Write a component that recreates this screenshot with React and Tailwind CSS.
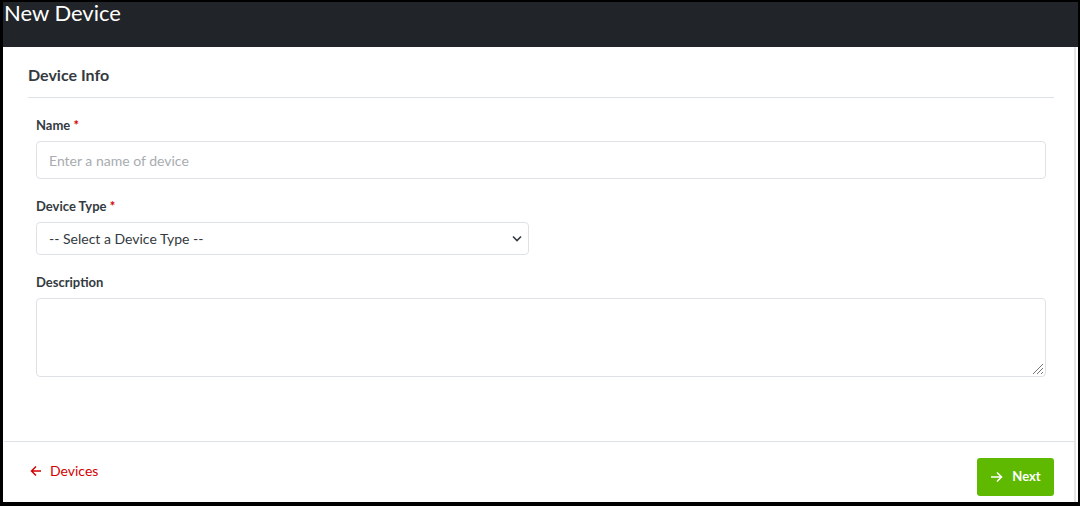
import React from "react";

export default function App() {
  return (
    <div className="w-[1080px] h-[506px] bg-black pl-[3px] pr-[2px] pt-[2px] pb-[4px] overflow-hidden" style={{ fontFamily: "Lato, 'Open Sans', sans-serif" }}>
      <div className="h-full bg-white flex flex-col">
        <div className="h-[45px] bg-[#212529] shrink-0">
          <div className="text-white text-[22px] leading-[22px] pl-[1px]">New Device</div>
        </div>
        <div className="flex-1 flex flex-col ml-[1px] mr-[2px] border-r-[2px] border-[#e5e5e5]">
          <div className="flex-1 pl-[24px] pr-[20px]">
            <div className="pt-[18px] pb-[12px] border-b border-[#dee2e6]">
              <h2 className="text-[16px] font-bold text-[#343a40] leading-[20px]">Device Info</h2>
            </div>
            <div className="pl-[8px] mr-[8px]">
              <label className="block mt-[19px] text-[13px] font-bold text-[#343a40] leading-[16px]">
                Name <span className="text-[#d40000]">*</span>
              </label>
              <div className="mt-[8px] h-[38px] border border-[#dee2e6] rounded-[4px] flex items-center px-[12px]">
                <span className="text-[14px] text-[#a8acb0]">Enter a name of device</span>
              </div>
              <label className="block mt-[19px] text-[13px] font-bold text-[#343a40] leading-[16px]">
                Device Type <span className="text-[#d40000]">*</span>
              </label>
              <div className="mt-[8px] w-[493px] h-[33px] border border-[#dee2e6] rounded-[4px] flex items-center justify-between pl-[12px] pr-[6px]">
                <span className="text-[14px] text-[#343a40]">-- Select a Device Type --</span>
                <svg width="10" height="7" viewBox="0 0 10 7" fill="none" stroke="#343a40" strokeWidth="1.6">
                  <path d="M1 1.5 L5 5.5 L9 1.5" />
                </svg>
              </div>
              <label className="block mt-[19px] text-[13px] font-bold text-[#343a40] leading-[16px]">
                Description
              </label>
              <div className="mt-[8px] h-[79px] border border-[#dee2e6] rounded-[4px] relative">
                <svg className="absolute right-[1px] bottom-[1px]" width="14" height="14" viewBox="0 0 14 14" stroke="#777" strokeWidth="1">
                  <path d="M13 3 L3 13 M13 7 L7 13 M13 11 L11 13" />
                </svg>
              </div>
            </div>
          </div>
          <div className="h-[61px] shrink-0 border-t border-[#dee2e6] flex items-start justify-between pl-[26px] pr-[20px]">
            <div className="mt-[18px] flex items-center gap-[8px] text-[#d40000] text-[14px]">
              <svg width="12" height="12" viewBox="0 0 12 12" fill="none" stroke="#d40000" strokeWidth="1.5">
                <path d="M11 6 H1.5 M6 1.5 L1.5 6 L6 10.5" />
              </svg>
              <span>Devices</span>
            </div>
            <button className="mt-[16px] w-[77px] h-[38px] bg-[#5fb900] rounded-[3px] flex items-center justify-center gap-[9px] text-white text-[13px] font-bold">
              <svg width="13" height="12" viewBox="0 0 13 12" fill="none" stroke="white" strokeWidth="1.6">
                <path d="M1 6 H11.5 M7 1.5 L11.5 6 L7 10.5" />
              </svg>
              <span>Next</span>
            </button>
          </div>
        </div>
      </div>
    </div>
  );
}
